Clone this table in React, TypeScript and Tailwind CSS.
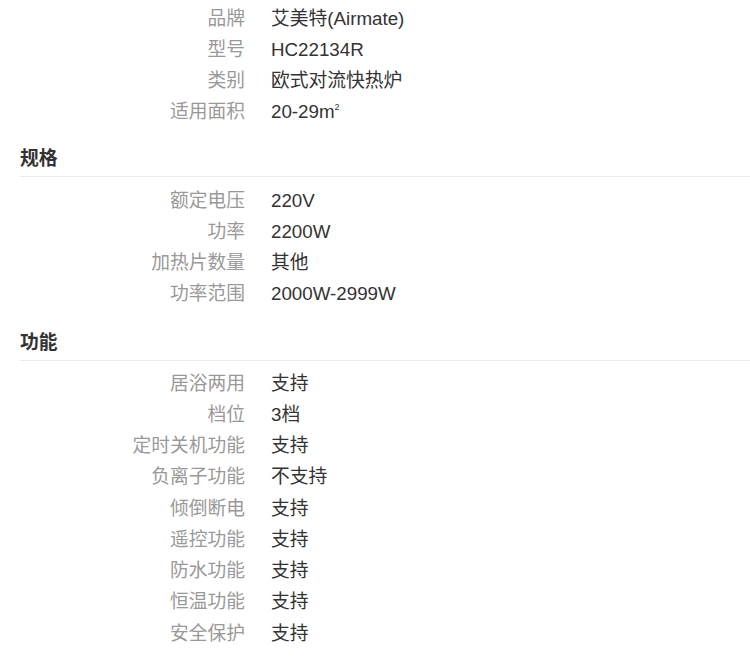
import React from "react";

type Row = [string, React.ReactNode];

const basic: Row[] = [
  ["品牌", "艾美特(Airmate)"],
  ["型号", "HC22134R"],
  ["类别", "欧式对流快热炉"],
  [
    "适用面积",
    <>
      20-29m<sup className="text-[9px] -top-[8px]">2</sup>
    </>,
  ],
];

const spec: Row[] = [
  ["额定电压", "220V"],
  ["功率", "2200W"],
  ["加热片数量", "其他"],
  ["功率范围", "2000W-2999W"],
];

const features: Row[] = [
  ["居浴两用", "支持"],
  ["档位", "3档"],
  ["定时关机功能", "支持"],
  ["负离子功能", "不支持"],
  ["倾倒断电", "支持"],
  ["遥控功能", "支持"],
  ["防水功能", "支持"],
  ["恒温功能", "支持"],
  ["安全保护", "支持"],
];

function Rows({ rows }: { rows: Row[] }) {
  return (
    <div>
      {rows.map(([label, value]) => (
        <div key={label} className="flex h-[31.25px] items-center">
          <div className="w-[245px] shrink-0 text-right text-[#999]">{label}</div>
          <div className="ml-[26px] text-[#333]">{value}</div>
        </div>
      ))}
    </div>
  );
}

function Heading({ children, className }: { children: string; className?: string }) {
  return (
    <div className={"ml-5 border-b border-[#ebebeb] pb-1 " + (className ?? "")}>
      <h3 className="text-[18.75px] font-bold leading-[26px] text-[#333]">{children}</h3>
    </div>
  );
}

export default function App() {
  return (
    <div
      className="w-[750px] h-[665px] overflow-hidden bg-white pt-[3px] text-[18.75px]"
      style={{ fontFamily: '"Liberation Sans", "Noto Sans CJK SC", sans-serif' }}
    >
      <Rows rows={basic} />
      <Heading className="mt-[18px]">规格</Heading>
      <div className="mt-[8px]">
        <Rows rows={spec} />
      </div>
      <Heading className="mt-[20px]">功能</Heading>
      <div className="mt-[7px]">
        <Rows rows={features} />
      </div>
    </div>
  );
}
